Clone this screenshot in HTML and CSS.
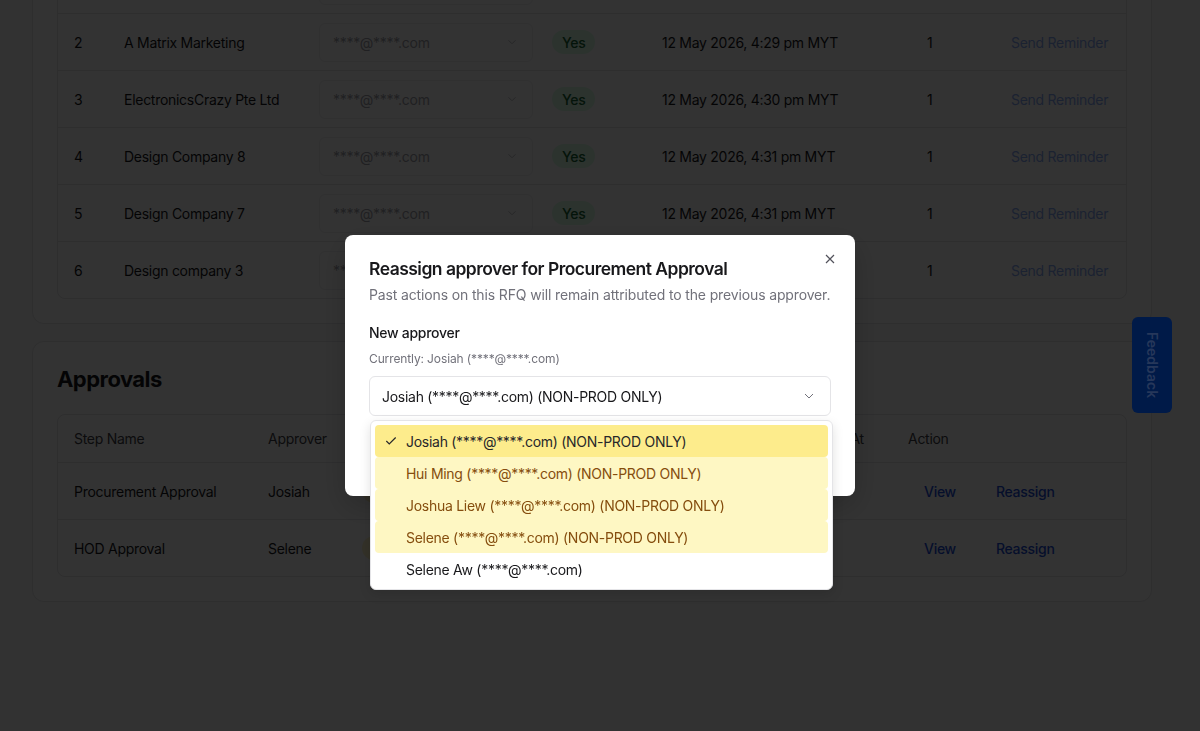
FILE: index.html
```html
<!DOCTYPE html>
<html>
<head>
    <title>RFQ - Approvals</title>
<link rel="stylesheet" href="styles.css">
</head>
<body>
    <main class="page">
        <section class="card">
            <h2 class="card-title">Invited Suppliers</h2>
            <div class="table suppliers">
                <div class="row head">
                    <div class="cell">#</div>
                    <div class="cell">Supplier</div>
                    <div class="cell">Contact</div>
                    <div class="cell">Viewed</div>
                    <div class="cell">Invited At</div>
                    <div class="cell">Reminders</div>
                    <div class="cell">Action</div>
                </div>
                <div class="row">
                    <div class="cell">1</div>
                    <div class="cell">Design Company 9</div>
                    <div class="cell"><div class="mini-select">****@****.com<svg viewBox="0 0 24 24"><path d="m6 9 6 6 6-6"/></svg></div></div>
                    <div class="cell"><span class="pill yes">Yes</span></div>
                    <div class="cell">12 May 2026, 4:28 pm MYT</div>
                    <div class="cell">1</div>
                    <div class="cell"><a class="reminder">Send Reminder</a></div>
                </div>
                <div class="row">
                    <div class="cell">2</div>
                    <div class="cell">A Matrix Marketing</div>
                    <div class="cell"><div class="mini-select">****@****.com<svg viewBox="0 0 24 24"><path d="m6 9 6 6 6-6"/></svg></div></div>
                    <div class="cell"><span class="pill yes">Yes</span></div>
                    <div class="cell">12 May 2026, 4:29 pm MYT</div>
                    <div class="cell">1</div>
                    <div class="cell"><a class="reminder">Send Reminder</a></div>
                </div>
                <div class="row">
                    <div class="cell">3</div>
                    <div class="cell">ElectronicsCrazy Pte Ltd</div>
                    <div class="cell"><div class="mini-select">****@****.com<svg viewBox="0 0 24 24"><path d="m6 9 6 6 6-6"/></svg></div></div>
                    <div class="cell"><span class="pill yes">Yes</span></div>
                    <div class="cell">12 May 2026, 4:30 pm MYT</div>
                    <div class="cell">1</div>
                    <div class="cell"><a class="reminder">Send Reminder</a></div>
                </div>
                <div class="row">
                    <div class="cell">4</div>
                    <div class="cell">Design Company 8</div>
                    <div class="cell"><div class="mini-select">****@****.com<svg viewBox="0 0 24 24"><path d="m6 9 6 6 6-6"/></svg></div></div>
                    <div class="cell"><span class="pill yes">Yes</span></div>
                    <div class="cell">12 May 2026, 4:31 pm MYT</div>
                    <div class="cell">1</div>
                    <div class="cell"><a class="reminder">Send Reminder</a></div>
                </div>
                <div class="row">
                    <div class="cell">5</div>
                    <div class="cell">Design Company 7</div>
                    <div class="cell"><div class="mini-select">****@****.com<svg viewBox="0 0 24 24"><path d="m6 9 6 6 6-6"/></svg></div></div>
                    <div class="cell"><span class="pill yes">Yes</span></div>
                    <div class="cell">12 May 2026, 4:31 pm MYT</div>
                    <div class="cell">1</div>
                    <div class="cell"><a class="reminder">Send Reminder</a></div>
                </div>
                <div class="row">
                    <div class="cell">6</div>
                    <div class="cell">Design company 3</div>
                    <div class="cell"><div class="mini-select">****@****.com<svg viewBox="0 0 24 24"><path d="m6 9 6 6 6-6"/></svg></div></div>
                    <div class="cell"><span class="pill yes">Yes</span></div>
                    <div class="cell">12 May 2026, 4:32 pm MYT</div>
                    <div class="cell">1</div>
                    <div class="cell"><a class="reminder">Send Reminder</a></div>
                </div>
            </div>
        </section>

        <section class="card">
            <h2 class="card-title">Approvals</h2>
            <div class="table approvals">
                <div class="row head">
                    <div class="cell">Step Name</div>
                    <div class="cell">Approver</div>
                    <div class="cell">Status</div>
                    <div class="cell">Comments</div>
                    <div class="cell">Actioned At</div>
                    <div class="cell">Action</div>
                </div>
                <div class="row">
                    <div class="cell">Procurement Approval</div>
                    <div class="cell">Josiah</div>
                    <div class="cell"><span class="pill pending">Pending</span></div>
                    <div class="cell">-</div>
                    <div class="cell">-</div>
                    <div class="cell actions"><a class="link">View</a><a class="link">Reassign</a></div>
                </div>
                <div class="row">
                    <div class="cell">HOD Approval</div>
                    <div class="cell">Selene</div>
                    <div class="cell"><span class="pill pending">Pending</span></div>
                    <div class="cell">-</div>
                    <div class="cell"></div>
                    <div class="cell actions"><a class="link">View</a><a class="link">Reassign</a></div>
                </div>
            </div>
        </section>
    </main>

    <div class="overlay">
        <div class="modal">
            <button class="close" type="button">
                <svg viewBox="0 0 24 24"><path d="M18 6 6 18M6 6l12 12"/></svg>
            </button>
            <h3 class="modal-title">Reassign approver for Procurement Approval</h3>
            <p class="modal-desc">Past actions on this RFQ will remain attributed to the previous approver.</p>

            <div class="field">
                <label class="field-label">New approver</label>
                <div class="field-hint">Currently: Josiah (****@****.com)</div>
                <div class="select-wrap">
                    <div class="select">
                        <span>Josiah (****@****.com) (NON-PROD ONLY)</span>
                        <svg viewBox="0 0 24 24"><path d="m6 9 6 6 6-6"/></svg>
                    </div>
                    <ul class="menu">
                        <li class="option selected">
                            <svg class="check" viewBox="0 0 24 24"><path d="M20 6 9 17l-5-5"/></svg>
                            Josiah (****@****.com) (NON-PROD ONLY)
                        </li>
                        <li class="option nonprod">Hui Ming (****@****.com) (NON-PROD ONLY)</li>
                        <li class="option nonprod">Joshua Liew (****@****.com) (NON-PROD ONLY)</li>
                        <li class="option nonprod">Selene (****@****.com) (NON-PROD ONLY)</li>
                        <li class="option">Selene Aw (****@****.com)</li>
                    </ul>
                </div>
            </div>

            <div class="modal-footer">
                <button class="btn" type="button">Cancel</button>
                <button class="btn primary" type="button">Reassign</button>
            </div>
        </div>
    </div>

    <button class="feedback" type="button">Feedback</button>
</body>
</html>
```

FILE: styles.css
```css
body {
  font-family: Inter, "Noto Sans", Arial, sans-serif;
  background-color: #f7f7f8;
  color: #18181b;
  margin: 0;
  padding: 0;
  font-size: 14px;
  letter-spacing: -0.02em;
}

.page {
  width: 1120px;
  margin-top: -165px;
  padding: 0 0 40px 32px;
  display: flex;
  flex-direction: column;
  gap: 17px;
}

.card {
  background-color: white;
  border: 1px solid #e4e4e7;
  border-radius: 12px;
  padding: 24px;
}

.card-title {
  font-size: 22px;
  line-height: 26px;
  font-weight: 700;
  letter-spacing: -0.025em;
  margin: 0 0 22px 0;
}

.table {
  border: 1px solid #e4e4e7;
  border-radius: 8px;
  overflow: hidden;
}

.row {
  display: grid;
  height: 57px;
  align-items: center;
  border-top: 1px solid #e4e4e7;
  box-sizing: border-box;
}

.row.head {
  height: 47px;
  border-top: none;
  color: #3f3f46;
}

.suppliers .row {
  grid-template-columns: 50px 195px 233px 110px 265px 84px 1fr;
}

.approvals .row {
  grid-template-columns: 194px 94px 214px 214px 118px 1fr;
}

.cell {
  padding: 0 16px;
  white-space: nowrap;
}

.mini-select {
  width: 214px;
  height: 39px;
  box-sizing: border-box;
  border: 1px solid #efeff1;
  border-radius: 6px;
  padding: 0 13px;
  display: flex;
  align-items: center;
  justify-content: space-between;
  color: #a1a1aa;
}

.mini-select svg {
  width: 14px;
  height: 14px;
  fill: none;
  stroke: #b4b4bb;
  stroke-width: 1.5;
}

.pill {
  display: inline-flex;
  align-items: center;
  height: 24px;
  padding: 0 10px;
  border-radius: 999px;
  font-weight: 500;
}

.pill.yes {
  background-color: #dcfce7;
  color: #166534;
}

.pill.pending {
  background-color: #fef3c7;
  color: #92400e;
}

.reminder {
  color: #2563eb;
  opacity: 0.55;
}

.actions {
  display: flex;
  gap: 8px;
}

.link {
  color: #1d4ed8;
  font-weight: 500;
  padding: 6px 16px;
}

/* modal */

.overlay {
  position: fixed;
  inset: 0;
  background-color: rgba(0, 0, 0, 0.8);
  display: flex;
  align-items: center;
  justify-content: center;
  z-index: 10;
}

.modal {
  position: relative;
  width: 510px;
  box-sizing: border-box;
  background-color: white;
  border-radius: 8px;
  padding: 24px;
  box-shadow: 0 10px 30px rgba(0, 0, 0, 0.2);
}

.close {
  position: absolute;
  top: 14px;
  right: 15px;
  width: 20px;
  height: 20px;
  padding: 0;
  border: none;
  background: none;
  display: flex;
  align-items: center;
  justify-content: center;
}

.close svg {
  width: 16px;
  height: 16px;
  fill: none;
  stroke: #52525b;
  stroke-width: 1.8;
}

.modal-title {
  font-size: 17.5px;
  line-height: 20px;
  font-weight: 600;
  letter-spacing: -0.03em;
  margin: 0;
}

.modal-desc {
  color: #71717a;
  margin: 6px 0 0 0;
  line-height: 20px;
  letter-spacing: -0.01em;
  white-space: nowrap;
}

.field {
  margin-top: 18px;
}

.field-label {
  display: block;
  font-weight: 500;
  line-height: 20px;
}

.field-hint {
  font-size: 12px;
  color: #71717a;
  margin-top: 8px;
  line-height: 16px;
  letter-spacing: -0.01em;
}

.select-wrap {
  position: relative;
  margin-top: 9px;
}

.select {
  height: 40px;
  box-sizing: border-box;
  border: 1px solid #e4e4e7;
  border-radius: 6px;
  padding: 0 13px 0 12px;
  display: flex;
  align-items: center;
  justify-content: space-between;
}

.select svg {
  width: 16px;
  height: 16px;
  fill: none;
  stroke: #71717a;
  stroke-width: 1.5;
}

.menu {
  position: absolute;
  top: 44px;
  left: 1px;
  width: 463px;
  box-sizing: border-box;
  list-style: none;
  margin: 0;
  padding: 4px;
  background-color: white;
  border: 1px solid #e4e4e7;
  border-radius: 6px;
  box-shadow: 0 4px 12px rgba(0, 0, 0, 0.12);
  z-index: 5;
}

.option {
  position: relative;
  height: 32px;
  display: flex;
  align-items: center;
  padding-left: 31px;
  border-radius: 4px;
  color: #18181b;
}

.option.selected {
  background-color: #fdec8c;
  color: #27272a;
}

.option.nonprod {
  background-color: #fef7c3;
  color: #854d0e;
}

.check {
  position: absolute;
  left: 9px;
  width: 14px;
  height: 14px;
  fill: none;
  stroke: #27272a;
  stroke-width: 2;
}

.modal-footer {
  display: flex;
  justify-content: flex-end;
  gap: 8px;
  margin-top: 20px;
}

.btn {
  height: 36px;
  padding: 0 16px;
  border: 1px solid #e4e4e7;
  border-radius: 6px;
  background-color: white;
  font-family: inherit;
  font-size: 14px;
  font-weight: 500;
}

.btn.primary {
  background-color: #18181b;
  color: white;
  border-color: #18181b;
}

.feedback {
  position: fixed;
  right: 28px;
  top: 317px;
  width: 40px;
  height: 96px;
  border: none;
  border-radius: 6px;
  background-color: #001a48;
  color: #26375a;
  writing-mode: vertical-rl;
  font-family: inherit;
  font-size: 14px;
  font-weight: 600;
  padding: 0;
  display: flex;
  align-items: center;
  justify-content: center;
  z-index: 20;
}
```
